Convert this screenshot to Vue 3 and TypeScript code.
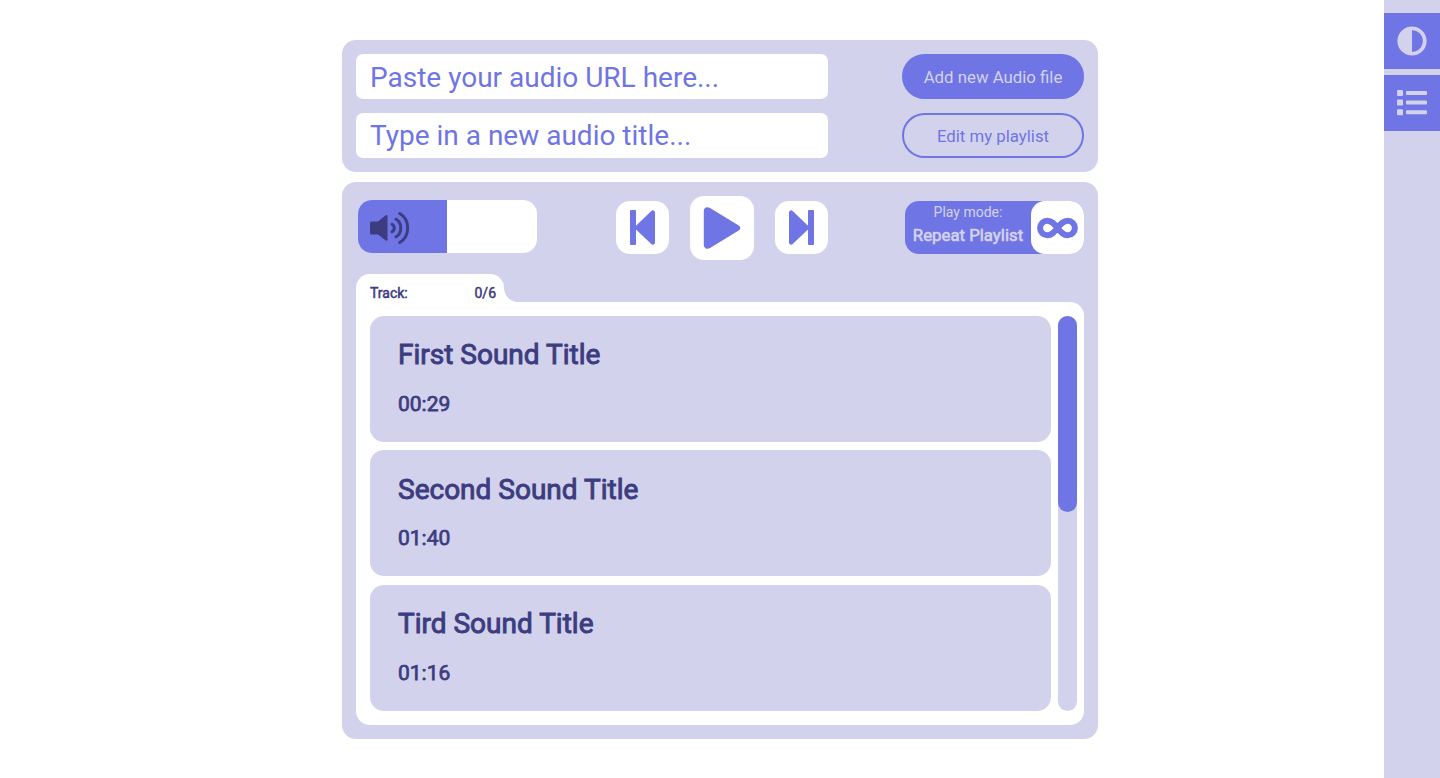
<script setup lang="ts">
interface Track {
  title: string
  duration: string
}

const tracks: Track[] = [
  { title: 'First Sound Title', duration: '00:29' },
  { title: 'Second Sound Title', duration: '01:40' },
  { title: 'Tird Sound Title', duration: '01:16' },
]
const total = 6
const current = 0
const volume = 49.8
</script>

<template>
  <div class="page">
    <main class="player">
      <form class="panel adder" @submit.prevent>
        <div class="fields">
          <input class="field url" type="text" placeholder="Paste your audio URL here..." />
          <input class="field" type="text" placeholder="Type in a new audio title..." />
        </div>
        <div class="actions">
          <button class="pill solid" type="button">Add new Audio file</button>
          <button class="pill outline" type="button">Edit my playlist</button>
        </div>
      </form>

      <section class="panel deck">
        <div class="controls">
          <div class="volume">
            <div class="level" :style="{ width: volume + '%' }">
              <svg class="speaker" width="40" height="34" viewBox="0 0 40 34">
                <path d="M1.5 10.5H8L15.7 4.2Q17.5 3.4 17.5 5V28.8Q17.5 30.4 15.7 29.6L8 23.5H1.5Q0 23.5 0 22V12Q0 10.500 1.500 10.500Z" fill="#3c3c80" />
                <g fill="none" stroke="#3c3c80" stroke-width="3" stroke-linecap="round">
                  <path d="M22 13.200Q24.200 14.400 24.200 17T22 20.800" />
                  <path d="M26 8.200C32.400 11.600 32.400 22.400 26 25.800" />
                  <path d="M29.700 2.500C40.300 8.500 40.300 25.500 29.700 31.500" />
                </g>
              </svg>
            </div>
          </div>

          <div class="transport">
            <button class="key" type="button" aria-label="Previous">
              <svg width="53" height="53" viewBox="0 0 53 53" fill="#6f75e4">
                <rect x="14" y="9" width="6" height="35" rx="1" />
                <path d="M19.500 25.200L35.300 9.900Q36.500 8.900 37.700 9.500Q39 10.100 39 11.500V41.500Q39 42.900 37.700 43.500Q36.500 44.100 35.300 43.100L19.500 28Z" />
              </svg>
            </button>
            <button class="key big" type="button" aria-label="Play">
              <svg width="64" height="64" viewBox="0 0 64 64" fill="#6f75e4">
                <path d="M13.800 15Q13.800 12.600 15.800 11.600Q17.800 10.600 20 12L48.300 29.200Q50.400 30.500 50.400 32T48.300 34.800L20 52Q17.800 53.400 15.800 52.400Q13.800 51.400 13.800 49Z" />
              </svg>
            </button>
            <button class="key" type="button" aria-label="Next">
              <svg width="53" height="53" viewBox="0 0 53 53" fill="#6f75e4">
                <rect x="33" y="9" width="6" height="35" rx="1" />
                <path d="M33.500 25.200L17.700 9.900Q16.500 8.900 15.300 9.500Q14 10.100 14 11.500V41.500Q14 42.900 15.300 43.500Q16.500 44.100 17.700 43.100L33.500 28Z" />
              </svg>
            </button>
          </div>

          <div class="mode">
            <div class="mode-text">
              <span class="mode-label">Play mode:</span>
              <span class="mode-name">Repeat Playlist</span>
            </div>
            <button class="key" type="button" aria-label="Play mode">
              <svg width="53" height="53" viewBox="0 0 53 53">
                <path d="M26.500 27C23 22.500 20.500 19.800 16.300 19.800A7.200 7.200 0 0 0 16.300 34.200C20.500 34.200 23 31.500 26.500 27C30 22.500 32.500 19.800 36.700 19.800A7.200 7.200 0 0 1 36.700 34.200C32.500 34.200 30 31.500 26.500 27Z" fill="none" stroke="#6f75e4" stroke-width="6" />
              </svg>
            </button>
          </div>
        </div>

        <div class="tab">
          <span>Track:</span>
          <span>{{ current }}/{{ total }}</span>
        </div>
        <div class="playlist">
          <ul class="tracks">
            <li v-for="track in tracks" :key="track.title" class="track">
              <h2 class="title">{{ track.title }}</h2>
              <span class="time">{{ track.duration }}</span>
            </li>
          </ul>
          <div class="scrollbar"><div class="thumb"></div></div>
        </div>
      </section>
    </main>

    <aside class="sidebar">
      <button class="side-key" type="button" aria-label="Theme">
        <svg width="56" height="56" viewBox="0 0 56 56">
          <circle cx="28" cy="28" r="12.700" fill="none" stroke="#d3d2ec" stroke-width="3.800" />
          <path d="M28 15A13 13 0 0 0 28 41Z" fill="#d3d2ec" />
        </svg>
      </button>
      <button class="side-key" type="button" aria-label="Playlists">
        <svg width="56" height="56" viewBox="0 0 56 56" fill="#d3d2ec">
          <g v-for="row in 3" :key="row">
            <rect x="13" :y="5.200 + row * 9.700" width="6" height="6" rx="1" />
            <rect x="22" :y="6.200 + row * 9.700" width="21" height="4" rx="1" />
          </g>
        </svg>
      </button>
    </aside>
  </div>
</template>

<style>
body {
  margin: 0;
  background: #fff;
}
</style>

<style scoped>
.page {
  --light: #d3d2ec;
  --accent: #6f75e4;
  --dark: #3c3c80;
  display: flex;
  box-sizing: border-box;
  height: 778px;
  padding-left: 342px;
  overflow: hidden;
  justify-content: space-between;
  font-family: Roboto, "Liberation Sans", sans-serif;
}
button {
  padding: 0;
  border: 0;
  font-family: inherit;
  cursor: pointer;
}
svg {
  display: block;
}
.player {
  display: flex;
  flex-direction: column;
  gap: 10px;
  width: 756px;
  padding-top: 40px;
}
.panel {
  box-sizing: border-box;
  border-radius: 14px;
  background: var(--light);
}
.adder {
  display: flex;
  justify-content: space-between;
  height: 132px;
  padding: 14px;
}
.fields,
.actions {
  display: flex;
  flex-direction: column;
  gap: 14px;
}
.field {
  box-sizing: border-box;
  width: 472px;
  height: 45px;
  padding: 0 14px;
  border: 0;
  border-radius: 7px;
  background: #fff;
  font-family: inherit;
  font-size: 28px;
}
.url {
  padding-top: 2px;
}
.field::placeholder {
  color: var(--accent);
  opacity: 1;
}
.pill {
  box-sizing: border-box;
  width: 182px;
  height: 45px;
  border: 2px solid var(--accent);
  border-radius: 23px;
  font-size: 16.8px;
}
.solid {
  background: var(--accent);
  color: var(--light);
}
.outline {
  background: transparent;
  color: var(--accent);
}
.deck {
  height: 557px;
  padding: 14px;
}
.controls {
  display: flex;
  align-items: center;
  justify-content: space-between;
  height: 64px;
  padding-left: 2px;
}
.volume {
  width: 179px;
  height: 53px;
  margin-bottom: 3px;
  border-radius: 14px;
  overflow: hidden;
  background: #fff;
}
.level {
  display: flex;
  align-items: center;
  box-sizing: border-box;
  height: 100%;
  padding: 2px 0 0 12px;
  background: var(--accent);
}
.speaker {
  flex: none;
}
.transport {
  display: flex;
  align-items: center;
  gap: 21px;
  margin-right: -1px;
  padding-left: 1px;
}
.key {
  flex: none;
  width: 53px;
  height: 53px;
  border-radius: 14px;
  background: #fff;
}
.transport .key:not(.big) {
  margin-bottom: 1px;
}
.big {
  width: 64px;
  height: 64px;
}
.mode {
  display: flex;
  justify-content: space-between;
  width: 179px;
  height: 53px;
  margin-bottom: 1px;
  border-radius: 14px;
  background: var(--accent);
  color: var(--light);
}
.mode-text {
  display: flex;
  flex-direction: column;
  align-items: center;
  width: 126px;
  white-space: nowrap;
}
.mode-label {
  padding-top: 3px;
  font-size: 14px;
  line-height: 16px;
}
.mode-name {
  padding-top: 5px;
  font-size: 16.8px;
  line-height: 20px;
  -webkit-text-stroke: 0.65px var(--light);
}
.tab {
  position: relative;
  display: flex;
  justify-content: space-between;
  box-sizing: border-box;
  width: 148px;
  height: 28px;
  margin-top: 14px;
  padding: 11px 8px 0 14px;
  border-radius: 14px 14px 0 0;
  background: #fff;
  color: var(--dark);
  font-size: 14px;
  line-height: 17px;
  -webkit-text-stroke: 0.5px var(--dark);
}
.tab::after {
  content: "";
  position: absolute;
  left: 100%;
  bottom: 0;
  width: 14px;
  height: 14px;
  background: radial-gradient(circle at 100% 0, transparent 13.5px, #fff 14.3px);
}
.playlist {
  display: flex;
  justify-content: space-between;
  box-sizing: border-box;
  height: 423px;
  padding: 14px 7px 14px 14px;
  border-radius: 0 14px 14px 14px;
  background: #fff;
}
.tracks {
  display: flex;
  flex-direction: column;
  gap: 8.4px;
  width: 681px;
  margin: 0;
  padding: 0;
  list-style: none;
}
.track {
  box-sizing: border-box;
  height: 126px;
  padding: 22.2px 28px 0;
  border-radius: 14px;
  background: var(--light);
  color: var(--dark);
}
.title {
  margin: 0;
  font-size: 28px;
  font-weight: 400;
  line-height: 33px;
  -webkit-text-stroke: 0.94px var(--dark);
}
.time {
  display: block;
  padding-top: 20.6px;
  font-size: 21px;
  line-height: 25px;
  -webkit-text-stroke: 0.75px var(--dark);
}
.scrollbar {
  width: 19px;
  height: 395px;
  border-radius: 9.5px;
  background: var(--light);
}
.thumb {
  height: 196px;
  border-radius: 9.5px;
  background: var(--accent);
}
.sidebar {
  display: flex;
  flex-direction: column;
  gap: 6px;
  box-sizing: border-box;
  width: 56px;
  padding-top: 13px;
  background: var(--light);
}
.side-key {
  width: 56px;
  height: 56px;
  background: var(--accent);
}
</style>
